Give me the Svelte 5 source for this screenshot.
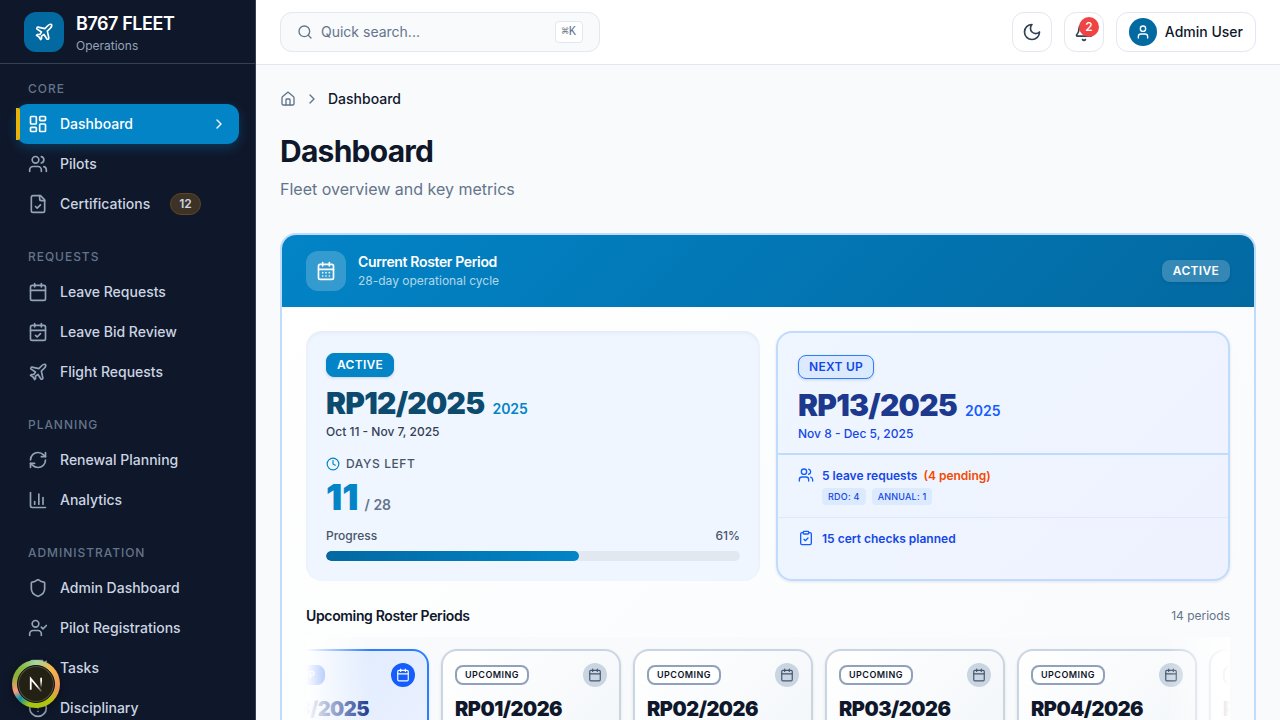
<script>
  const icons = {
    dashboard:
      '<rect x="3" y="3" width="7" height="9" rx="1"/><rect x="14" y="3" width="7" height="5" rx="1"/><rect x="14" y="12" width="7" height="9" rx="1"/><rect x="3" y="16" width="7" height="5" rx="1"/>',
    users:
      '<path d="M16 21v-2a4 4 0 0 0-4-4H6a4 4 0 0 0-4 4v2"/><circle cx="9" cy="7" r="4"/><path d="M22 21v-2a4 4 0 0 0-3-3.87"/><path d="M16 3.13a4 4 0 0 1 0 7.75"/>',
    fileCheck:
      '<path d="M15 2H6a2 2 0 0 0-2 2v16a2 2 0 0 0 2 2h12a2 2 0 0 0 2-2V7Z"/><path d="M14 2v4a2 2 0 0 0 2 2h4"/><path d="m9 15 2 2 4-4"/>',
    calendar:
      '<path d="M8 2v4"/><path d="M16 2v4"/><rect x="3" y="4" width="18" height="18" rx="2"/><path d="M3 10h18"/>',
    calendarCheck:
      '<path d="M8 2v4"/><path d="M16 2v4"/><rect x="3" y="4" width="18" height="18" rx="2"/><path d="M3 10h18"/><path d="m9 16 2 2 4-4"/>',
    calendarDays:
      '<path d="M8 2v4"/><path d="M16 2v4"/><rect x="3" y="4" width="18" height="18" rx="2"/><path d="M3 10h18"/><path d="M8 14h.01"/><path d="M12 14h.01"/><path d="M16 14h.01"/><path d="M8 18h.01"/><path d="M12 18h.01"/><path d="M16 18h.01"/>',
    plane:
      '<path d="M17.8 19.2 16 11l3.5-3.5C21 6 21.5 4 21 3c-1-.5-3 0-4.5 1.5L13 8 4.8 6.2c-.5-.1-.9.1-1.1.5l-.3.5c-.2.5-.1 1 .3 1.3L9 12l-2 3H4l-1 1 3 2 2 3 1-1v-3l3-2 3.5 5.3c.3.4.8.5 1.3.3l.5-.2c.4-.3.6-.7.5-1.2z"/>',
    refresh:
      '<path d="M3 12a9 9 0 0 1 9-9 9.75 9.75 0 0 1 6.74 2.74L21 8"/><path d="M21 3v5h-5"/><path d="M21 12a9 9 0 0 1-9 9 9.75 9.75 0 0 1-6.74-2.74L3 16"/><path d="M8 16H3v5"/>',
    chart: '<path d="M3 3v16a2 2 0 0 0 2 2h16"/><path d="M18 17V9"/><path d="M13 17V5"/><path d="M8 17v-3"/>',
    shield:
      '<path d="M20 13c0 5-3.5 7.5-7.66 8.95a1 1 0 0 1-.67-.01C7.5 20.5 4 18 4 13V6a1 1 0 0 1 1-1c2 0 4.5-1.2 6.24-2.72a1.17 1.17 0 0 1 1.52 0C14.51 3.81 17 5 19 5a1 1 0 0 1 1 1z"/>',
    userCheck:
      '<path d="m16 11 2 2 4-4"/><path d="M16 21v-2a4 4 0 0 0-4-4H6a4 4 0 0 0-4 4v2"/><circle cx="9" cy="7" r="4"/>',
    tasks:
      '<path d="M21 10.5V19a2 2 0 0 1-2 2H5a2 2 0 0 1-2-2V5a2 2 0 0 1 2-2h12.5"/><path d="m9 11 3 3L22 4"/>',
    alert: '<circle cx="12" cy="12" r="10"/><path d="M12 8v4"/><path d="M12 16h.01"/>',
    chevron: '<path d="m9 18 6-6-6-6"/>',
    search: '<circle cx="11" cy="11" r="8"/><path d="m21 21-4.3-4.3"/>',
    moon: '<path d="M12 3a6 6 0 0 0 9 9 9 9 0 1 1-9-9Z"/>',
    bell:
      '<path d="M10.268 21a2 2 0 0 0 3.464 0"/><path d="M3.262 15.326A1 1 0 0 0 4 17h16a1 1 0 0 0 .74-1.673C19.41 13.956 18 12.499 18 8A6 6 0 0 0 6 8c0 4.499-1.411 5.956-2.738 7.326"/>',
    user: '<path d="M19 21v-2a4 4 0 0 0-4-4H9a4 4 0 0 0-4 4v2"/><circle cx="12" cy="7" r="4"/>',
    home:
      '<path d="M15 21v-8a1 1 0 0 0-1-1h-4a1 1 0 0 0-1 1v8"/><path d="M3 10a2 2 0 0 1 .709-1.528l7-5.999a2 2 0 0 1 2.582 0l7 5.999A2 2 0 0 1 21 10v9a2 2 0 0 1-2 2H5a2 2 0 0 1-2-2z"/>',
    clock: '<circle cx="12" cy="12" r="10"/><path d="M12 6v6l4 2"/>',
    clipboard:
      '<rect x="8" y="2" width="8" height="4" rx="1"/><path d="M16 4h2a2 2 0 0 1 2 2v14a2 2 0 0 1-2 2H6a2 2 0 0 1-2-2V6a2 2 0 0 1 2-2h2"/><path d="m9 14 2 2 4-4"/>',
  };

  const sections = [
    {
      title: 'Core',
      items: [
        { label: 'Dashboard', icon: 'dashboard', active: true },
        { label: 'Pilots', icon: 'users' },
        { label: 'Certifications', icon: 'fileCheck', badge: 12 },
      ],
    },
    {
      title: 'Requests',
      items: [
        { label: 'Leave Requests', icon: 'calendar' },
        { label: 'Leave Bid Review', icon: 'calendarCheck' },
        { label: 'Flight Requests', icon: 'plane' },
      ],
    },
    {
      title: 'Planning',
      items: [
        { label: 'Renewal Planning', icon: 'refresh' },
        { label: 'Analytics', icon: 'chart' },
      ],
    },
    {
      title: 'Administration',
      items: [
        { label: 'Admin Dashboard', icon: 'shield' },
        { label: 'Pilot Registrations', icon: 'userCheck' },
        { label: 'Tasks', icon: 'tasks' },
        { label: 'Disciplinary', icon: 'alert' },
      ],
    },
  ];

  const daysLeft = 11;
  const cycleDays = 28;
  const progress = Math.round(((cycleDays - daysLeft) / cycleDays) * 100);

  const periods = [
    { code: 'RP13/2025', tag: 'Next up', next: true },
    { code: 'RP01/2026', tag: 'Upcoming' },
    { code: 'RP02/2026', tag: 'Upcoming' },
    { code: 'RP03/2026', tag: 'Upcoming' },
    { code: 'RP04/2026', tag: 'Upcoming' },
    { code: 'RP05/2026', tag: 'Upcoming' },
  ];
</script>

{#snippet icon(name, size)}
  <svg
    width={size}
    height={size}
    viewBox="0 0 24 24"
    fill="none"
    stroke="currentColor"
    stroke-width="2"
    stroke-linecap="round"
    stroke-linejoin="round"
    aria-hidden="true">{@html icons[name]}</svg>
{/snippet}

<div class="shell">
  <aside class="sidebar">
    <div class="brand">
      <span class="brand-mark">{@render icon('plane', 20)}</span>
      <div>
        <div class="brand-name">B767 FLEET</div>
        <div class="brand-sub">Operations</div>
      </div>
    </div>
    <nav class="nav" aria-label="Main">
      {#each sections as section}
        <section>
          <h2>{section.title}</h2>
          {#each section.items as item}
            <a href="#top" class="nav-item" class:active={item.active} aria-current={item.active ? 'page' : undefined}>
              {@render icon(item.icon, 20)}
              <span>{item.label}</span>
              {#if item.badge}<span class="count">{item.badge}</span>{/if}
              {#if item.active}<span class="arrow">{@render icon('chevron', 16)}</span>{/if}
            </a>
          {/each}
        </section>
      {/each}
    </nav>
  </aside>

  <div class="page">
    <header class="topbar">
      <label class="search">
        {@render icon('search', 16)}
        <input type="search" placeholder="Quick search..." aria-label="Quick search" />
        <kbd>⌘K</kbd>
      </label>
      <div class="actions">
        <button class="square" aria-label="Toggle dark mode">{@render icon('moon', 20)}</button>
        <button class="square" aria-label="Notifications">
          {@render icon('bell', 20)}
          <span class="alert-count">2</span>
        </button>
        <button class="account">
          <span class="avatar">{@render icon('user', 16)}</span>
          Admin User
        </button>
      </div>
    </header>

    <main>
      <nav class="crumbs" aria-label="Breadcrumb">
        <a href="#top" aria-label="Home">{@render icon('home', 16)}</a>
        {@render icon('chevron', 16)}
        <span>Dashboard</span>
      </nav>
      <h1>Dashboard</h1>
      <p class="lead">Fleet overview and key metrics</p>

      <section class="roster">
        <div class="roster-head">
          <span class="roster-icon">{@render icon('calendarDays', 20)}</span>
          <div class="roster-title">
            <h3>Current Roster Period</h3>
            <p>28-day operational cycle</p>
          </div>
          <span class="pill glass">ACTIVE</span>
        </div>

        <div class="roster-body">
          <div class="columns">
            <article class="current">
              <span class="pill solid">ACTIVE</span>
              <div class="code">RP12/2025 <small>2025</small></div>
              <p class="dates">Oct 11 - Nov 7, 2025</p>
              <div class="left-label">{@render icon('clock', 14)} DAYS LEFT</div>
              <div class="days">{daysLeft} <small>/ {cycleDays}</small></div>
              <div class="progress-label"><span>Progress</span><span>{progress}%</span></div>
              <div class="track"><div class="fill" style="width: {progress}%"></div></div>
            </article>

            <article class="next">
              <div class="next-head">
                <span class="pill outline">NEXT UP</span>
                <div class="code">RP13/2025 <small>2025</small></div>
                <p class="dates">Nov 8 - Dec 5, 2025</p>
              </div>
              <div class="next-row">
                {@render icon('users', 16)}
                <div>
                  <p class="requests">5 leave requests <span class="pending">(4 pending)</span></p>
                  <div class="tags"><span>RDO: 4</span><span>ANNUAL: 1</span></div>
                </div>
              </div>
              <div class="next-row">
                {@render icon('clipboard', 16)}
                <p>15 cert checks planned</p>
              </div>
            </article>
          </div>

          <div class="upcoming-head">
            <h3>Upcoming Roster Periods</h3>
            <span>14 periods</span>
          </div>
          <div class="carousel">
            <div class="strip">
              {#each periods as p}
                <article class="period" class:highlight={p.next}>
                  <div class="period-top">
                    <span class="tag">{p.tag}</span>
                    <span class="disc">{@render icon('calendar', 14)}</span>
                  </div>
                  <div class="period-code">{p.code}</div>
                </article>
              {/each}
            </div>
          </div>
        </div>
      </section>
    </main>
  </div>

  <button class="dev" aria-label="Open developer tools">
    <span class="dev-core">
      <svg width="20" height="20" viewBox="0 0 16 16" fill="none" aria-hidden="true">
        <defs>
          <linearGradient id="stem" x1="0" y1="0" x2="0" y2="1">
            <stop offset="0.3" stop-color="#fff" />
            <stop offset="1" stop-color="#fff" stop-opacity="0" />
          </linearGradient>
          <linearGradient id="slash" gradientUnits="userSpaceOnUse" x1="9" y1="9" x2="13" y2="15">
            <stop offset="0" stop-color="#fff" />
            <stop offset="1" stop-color="#fff" stop-opacity="0" />
          </linearGradient>
        </defs>
        <path d="M3.8 12.6V3.8L12.4 14" stroke="url(#slash)" stroke-width="1.4" />
        <rect x="11.4" y="3" width="1.4" height="8" fill="url(#stem)" />
      </svg>
    </span>
  </button>
</div>

<style>
  :global(body) {
    margin: 0;
    font-family: Inter, 'Liberation Sans', sans-serif;
    background: #f8fafc;
    color: #0f172a;
  }
  .shell,
  .shell :global(*) {
    box-sizing: border-box;
  }
  .shell {
    display: flex;
    height: 100vh;
    overflow: hidden;
    font-size: 14px;
    line-height: 20px;
  }
  h1, h2, h3, p {
    margin: 0;
  }
  a {
    color: inherit;
    text-decoration: none;
  }
  button {
    font: inherit;
    color: inherit;
    cursor: pointer;
  }
  svg {
    flex: none;
    display: block;
  }

  .sidebar {
    flex: 0 0 256px;
    background: #0f172a;
    border-right: 1px solid #334155;
    color: #cbd5e1;
    overflow: hidden;
  }
  .brand {
    display: flex;
    align-items: center;
    gap: 12px;
    height: 64px;
    padding: 0 24px;
    border-bottom: 1px solid #334155;
  }
  .brand-mark {
    display: grid;
    place-items: center;
    width: 40px;
    height: 40px;
    border-radius: 12px;
    background: #0369a1;
    color: #fff;
  }
  .brand-name {
    font-size: 18px;
    line-height: 28px;
    font-weight: 600;
    letter-spacing: -0.025em;
    color: #fff;
  }
  .brand-sub {
    font-size: 12px;
    line-height: 16px;
    color: #94a3b8;
  }
  .nav {
    display: flex;
    flex-direction: column;
    gap: 24px;
    padding: 16px;
  }
  .nav h2 {
    padding: 0 12px 6px;
    font-size: 12px;
    line-height: 18px;
    font-weight: 500;
    letter-spacing: 0.08em;
    text-transform: uppercase;
    color: #64748b;
  }
  .nav-item {
    position: relative;
    display: flex;
    align-items: center;
    gap: 12px;
    height: 40px;
    padding: 0 12px;
    border-radius: 12px;
    font-weight: 500;
  }
  .nav-item > :global(svg) {
    color: #94a3b8;
  }
  .nav-item.active {
    background: #0284c7;
    color: #fff;
    box-shadow: 0 4px 12px rgba(2, 132, 199, 0.3);
  }
  .nav-item.active > :global(svg) {
    color: #fff;
  }
  .nav-item.active::before {
    content: '';
    position: absolute;
    left: 0;
    top: 4px;
    width: 4px;
    height: 32px;
    border-radius: 0 2px 2px 0;
    background: #eab308;
  }
  .arrow {
    margin-left: auto;
  }
  .count {
    margin-left: 8px;
    padding: 2px 8px;
    border: 1px solid #5f4520;
    border-radius: 11px;
    background: #3d3226;
    font-size: 12px;
    line-height: 16px;
    font-weight: 600;
  }

  .page {
    flex: 1;
    min-width: 0;
  }
  .topbar {
    display: flex;
    align-items: center;
    justify-content: space-between;
    height: 65px;
    padding: 0 24px;
    border-bottom: 1px solid #e2e8f0;
    background: #fff;
  }
  .search {
    display: flex;
    align-items: center;
    gap: 8px;
    width: 320px;
    height: 40px;
    padding: 0 16px;
    border: 1px solid #e2e8f0;
    border-radius: 12px;
    background: #f8fafc;
    color: #64748b;
  }
  .search input {
    flex: 1;
    min-width: 0;
    padding: 0;
    border: 0;
    outline: 0;
    background: none;
    font: inherit;
    color: inherit;
  }
  .search input::placeholder {
    color: #64748b;
    opacity: 1;
  }
  kbd {
    padding: 2px 6px;
    border: 1px solid #e2e8f0;
    border-radius: 4px;
    background: #fff;
    font: 12px/16px 'Liberation Mono', 'DejaVu Sans Mono', monospace;
  }
  .actions {
    display: flex;
    gap: 12px;
  }
  .square,
  .account {
    position: relative;
    display: flex;
    align-items: center;
    justify-content: center;
    width: 40px;
    height: 40px;
    padding: 0;
    border: 1px solid #e2e8f0;
    border-radius: 12px;
    background: #fff;
    color: #334155;
  }
  .account {
    gap: 8px;
    width: auto;
    padding: 0 12px;
    color: #0f172a;
    font-weight: 500;
  }
  .avatar {
    display: grid;
    place-items: center;
    width: 28px;
    height: 28px;
    border-radius: 50%;
    background: #0369a1;
    color: #fff;
  }
  .alert-count {
    position: absolute;
    top: 4px;
    right: 4px;
    width: 20px;
    height: 20px;
    border-radius: 50%;
    background: #ef4444;
    color: #fff;
    font-size: 12px;
    font-weight: 500;
    text-align: center;
  }

  main {
    padding: 24px;
  }
  .crumbs {
    display: flex;
    align-items: center;
    gap: 8px;
    color: #64748b;
    margin-bottom: 24px;
  }
  .crumbs span {
    color: #0f172a;
    font-weight: 500;
  }
  h1 {
    font-size: 30px;
    line-height: 36px;
    font-weight: 700;
    letter-spacing: -0.025em;
    font-variation-settings: 'opsz' 32;
  }
  .lead {
    margin: 8px 0 32px;
    font-size: 16px;
    line-height: 24px;
    font-variation-settings: 'opsz' 32;
    color: #64748b;
  }

  .roster {
    border: 2px solid #bfdbfe;
    border-radius: 16px;
    background: linear-gradient(135deg, #fff, #f8fafc);
    overflow: hidden;
  }
  .roster-head {
    display: flex;
    align-items: center;
    gap: 12px;
    padding: 16px 24px;
    background: linear-gradient(135deg, #0284c7, #0369a1);
    color: #fff;
  }
  .roster-icon {
    display: grid;
    place-items: center;
    width: 40px;
    height: 40px;
    border-radius: 12px;
    background: rgba(255, 255, 255, 0.2);
  }
  .roster-title {
    flex: 1;
  }
  h3 {
    font-size: 14px;
    line-height: 20px;
    font-weight: 600;
    letter-spacing: -0.025em;
  }
  .roster-title p {
    font-size: 12px;
    line-height: 18px;
    color: rgba(255, 255, 255, 0.7);
  }
  .pill {
    display: block;
    width: fit-content;
    padding: 2px 10px;
    border: 1px solid transparent;
    border-radius: 8px;
    font-size: 12px;
    line-height: 18px;
    font-weight: 600;
    letter-spacing: 0.025em;
    box-shadow: 0 1px 3px rgba(15, 23, 42, 0.15);
  }
  .glass {
    background: rgba(255, 255, 255, 0.2);
    line-height: 16px;
  }
  .solid {
    border-color: #0284c7;
    background: #0284c7;
    color: #fff;
  }
  .outline {
    border-color: #2b7fff;
    background: #dbeafe;
    color: #1447e6;
  }
  .roster-body {
    padding: 24px;
  }
  .columns {
    display: grid;
    grid-template-columns: 1fr 1fr;
    gap: 16px;
    margin-bottom: 24px;
  }
  .current,
  .next {
    border-radius: 16px;
    background: #eff6ff;
  }
  .current {
    padding: 22px 20px 20px;
    box-shadow: inset 0 2px 4px rgba(15, 23, 42, 0.05);
  }
  .code,
  .days {
    display: flex;
    align-items: baseline;
    font-weight: 900;
  }
  .code {
    gap: 8px;
    margin-top: 10px;
    font-size: 30px;
    line-height: 32px;
    letter-spacing: -0.025em;
    color: #0c4a6e;
  }
  .code small,
  .days small {
    font-size: 14px;
    line-height: 20px;
    font-weight: 600;
    letter-spacing: 0;
  }
  .code small {
    color: #0284c7;
  }
  .dates {
    margin-top: 4px;
    font-size: 12px;
    line-height: 18px;
    font-weight: 500;
    color: #334155;
  }
  .left-label {
    display: flex;
    align-items: center;
    gap: 6px;
    margin-top: 14px;
    font-size: 12px;
    line-height: 18px;
    font-weight: 500;
    letter-spacing: 0.05em;
    color: #475569;
  }
  .left-label > :global(svg) {
    color: #0284c7;
  }
  .days {
    gap: 6px;
    margin-top: 4px;
    font-size: 36px;
    line-height: 40px;
    color: #0284c7;
  }
  .days small {
    color: #64748b;
  }
  .progress-label {
    display: flex;
    justify-content: space-between;
    margin: 10px 0 6px;
    font-size: 12px;
    line-height: 18px;
    font-weight: 500;
    color: #475569;
  }
  .track {
    height: 10px;
    border-radius: 5px;
    background: #e2e8f0;
    overflow: hidden;
  }
  .fill {
    height: 100%;
    border-radius: 5px;
    background: linear-gradient(90deg, #0369a1, #0284c7);
  }
  .next {
    border: 2px solid #bfdbfe;
    background: linear-gradient(135deg, #eff6ff, #eef2ff);
    box-shadow: 0 1px 3px rgba(15, 23, 42, 0.1);
  }
  .next .code {
    color: #1c398e;
  }
  .next .code small {
    color: #155dfc;
  }
  .next .dates {
    color: #1447e6;
  }
  .next-head {
    padding: 22px 20px 10px;
    border-bottom: 2px solid #bfdbfe;
  }
  .next-row {
    display: flex;
    gap: 8px;
    padding: 12px 20px;
    font-size: 12px;
    line-height: 18px;
    font-weight: 600;
    color: #1447e6;
  }
  .next-row > :global(svg) {
    color: #155dfc;
  }
  .next-row + .next-row {
    border-top: 1px solid #dbeafe;
  }
  .requests {
    display: flex;
    gap: 6px;
  }
  .pending {
    color: #f54900;
  }
  .tags {
    display: flex;
    gap: 6px;
    margin-top: 3px;
  }
  .tags span {
    padding: 2px 6px;
    border-radius: 4px;
    background: #dbeafe;
    font-size: 9px;
    line-height: 13px;
    font-weight: 500;
    letter-spacing: 0.025em;
  }

  .upcoming-head {
    display: flex;
    align-items: center;
    justify-content: space-between;
    margin-bottom: 10px;
    line-height: 22px;
  }
  .upcoming-head h3 {
    line-height: 22px;
  }
  .upcoming-head span {
    font-size: 12px;
    color: #64748b;
  }
  .carousel {
    position: relative;
    padding: 12px 0;
    background: #f9fafc;
    overflow: hidden;
  }
  .carousel::before,
  .carousel::after {
    content: '';
    position: absolute;
    z-index: 1;
    top: 0;
    bottom: 0;
    left: 0;
    width: 64px;
    background: linear-gradient(90deg, #fff, rgba(255, 255, 255, 0));
  }
  .carousel::after {
    left: auto;
    right: 0;
    background: linear-gradient(270deg, #fff, rgba(255, 255, 255, 0));
  }
  .strip {
    display: flex;
    gap: 12px;
    margin-left: -57px;
  }
  .period {
    flex: 0 0 180px;
    height: 140px;
    padding: 12px;
    border: 2px solid #cad5e2;
    border-radius: 16px;
    background: linear-gradient(135deg, #fff, #f1f5f9);
    box-shadow: 0 1px 3px rgba(15, 23, 42, 0.1);
  }
  .period-top {
    display: flex;
    align-items: center;
    justify-content: space-between;
    margin-bottom: 8px;
  }
  .tag {
    padding: 2px 8px;
    border: 2px solid #90a1b9;
    border-radius: 8px;
    background: #fff;
    font-size: 9px;
    line-height: 12px;
    font-weight: 600;
    letter-spacing: 0.05em;
    text-transform: uppercase;
  }
  .disc {
    display: grid;
    place-items: center;
    width: 24px;
    height: 24px;
    border-radius: 50%;
    background: #cad5e2;
    color: #45556c;
  }
  .period-code {
    font-size: 20px;
    line-height: 28px;
    font-weight: 900;
    letter-spacing: -0.025em;
  }
  .highlight {
    border-color: #2b7fff;
    background: linear-gradient(135deg, #dbeafe, #eef2ff);
  }
  .highlight .tag,
  .highlight .disc {
    border-color: #155dfc;
    background: #155dfc;
    color: #fff;
  }
  .highlight .period-code {
    color: #1c398e;
  }

  .dev {
    position: fixed;
    left: 12px;
    bottom: 12px;
    display: grid;
    place-items: center;
    width: 48px;
    height: 48px;
    padding: 0;
    border: 0;
    border-radius: 50%;
    background: conic-gradient(#a3d8a0, #f5b84a 45deg, #f0965f 100deg, #b5c40a 140deg, #a3c614 200deg, #0e8fa8 228deg, #ff9a80 250deg, #8fae32 290deg, #86bb45 320deg, #a3d8a0);
    box-shadow: 0 2px 8px rgba(0, 0, 0, 0.4);
  }
  .dev-core {
    display: grid;
    place-items: center;
    width: 38px;
    height: 38px;
    border: 1px solid #111;
    border-radius: 50%;
    background: #232114;
    box-shadow: inset 0 0 0 1px #55523f;
  }
</style>
